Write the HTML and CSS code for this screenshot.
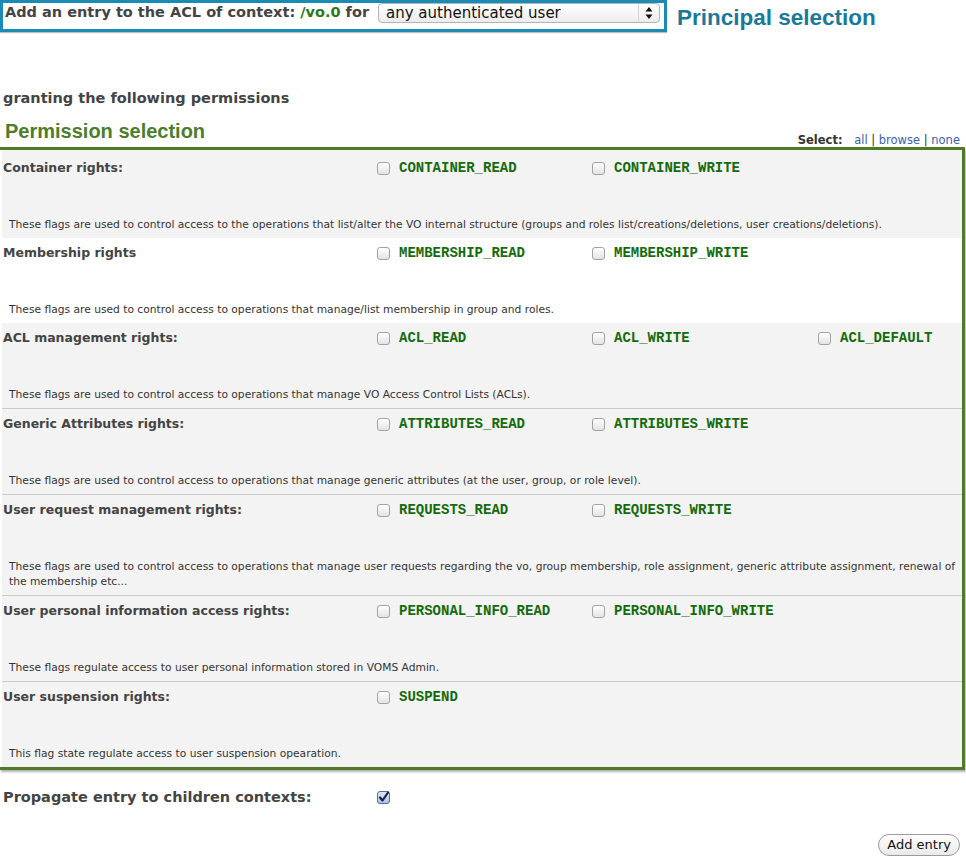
FILE: index.html
```html
<!DOCTYPE html>
<html>
<head>
<meta charset="utf-8">
<title>Add ACL entry</title>
<link rel="stylesheet" href="styles.css">
</head>
<body>
<div class="top">
  <div class="principal">
    <span class="lead">Add an entry to the ACL of context: <span class="ctx">/vo.0</span> for</span>
    <div class="select">
      <span class="select-text">any authenticated user</span>
      <span class="select-sep"></span>
      <svg class="select-arrows" width="8" height="12" viewBox="0 0 8 12"><path d="M4 0 L7.5 4.5 L0.5 4.5 Z M4 12 L7.5 7.5 L0.5 7.5 Z" fill="#111"/></svg>
    </div>
  </div>
  <div class="annot annot-blue">Principal selection</div>
</div>

<div class="granting">granting the following permissions</div>

<div class="perm-head">
  <div class="annot annot-green">Permission selection</div>
  <div class="select-links"><b>Select:</b> <a href="#">all</a> | <a href="#">browse</a> | <a href="#">none</a></div>
</div>

<div class="perm-box">
  <div class="group g-gray">
    <div class="grp-row">
      <div class="grp-label">Container rights:</div>
      <div class="perm"><span class="cb"></span><code>CONTAINER_READ</code></div>
      <div class="perm"><span class="cb"></span><code>CONTAINER_WRITE</code></div>
    </div>
    <div class="grp-desc">These flags are used to control access to the operations that list/alter the VO internal structure (groups and roles list/creations/deletions, user creations/deletions).</div>
  </div>

  <div class="group g-white">
    <div class="grp-row">
      <div class="grp-label">Membership rights</div>
      <div class="perm"><span class="cb"></span><code>MEMBERSHIP_READ</code></div>
      <div class="perm"><span class="cb"></span><code>MEMBERSHIP_WRITE</code></div>
    </div>
    <div class="grp-desc">These flags are used to control access to operations that manage/list membership in group and roles.</div>
  </div>

  <div class="group g-gray sep">
    <div class="grp-row">
      <div class="grp-label">ACL management rights:</div>
      <div class="perm"><span class="cb"></span><code>ACL_READ</code></div>
      <div class="perm"><span class="cb"></span><code>ACL_WRITE</code></div>
      <div class="perm"><span class="cb"></span><code>ACL_DEFAULT</code></div>
    </div>
    <div class="grp-desc">These flags are used to control access to operations that manage VO Access Control Lists (ACLs).</div>
  </div>

  <div class="group g-gray sep">
    <div class="grp-row">
      <div class="grp-label">Generic Attributes rights:</div>
      <div class="perm"><span class="cb"></span><code>ATTRIBUTES_READ</code></div>
      <div class="perm"><span class="cb"></span><code>ATTRIBUTES_WRITE</code></div>
    </div>
    <div class="grp-desc">These flags are used to control access to operations that manage generic attributes (at the user, group, or role level).</div>
  </div>

  <div class="group g-gray sep">
    <div class="grp-row">
      <div class="grp-label">User request management rights:</div>
      <div class="perm"><span class="cb"></span><code>REQUESTS_READ</code></div>
      <div class="perm"><span class="cb"></span><code>REQUESTS_WRITE</code></div>
    </div>
    <div class="grp-desc">These flags are used to control access to operations that manage user requests regarding the vo, group membership, role assignment, generic attribute assignment, renewal of the membership etc...</div>
  </div>

  <div class="group g-gray sep">
    <div class="grp-row">
      <div class="grp-label">User personal information access rights:</div>
      <div class="perm"><span class="cb"></span><code>PERSONAL_INFO_READ</code></div>
      <div class="perm"><span class="cb"></span><code>PERSONAL_INFO_WRITE</code></div>
    </div>
    <div class="grp-desc">These flags regulate access to user personal information stored in VOMS Admin.</div>
  </div>

  <div class="group g-gray">
    <div class="grp-row">
      <div class="grp-label">User suspension rights:</div>
      <div class="perm"><span class="cb"></span><code>SUSPEND</code></div>
    </div>
    <div class="grp-desc">This flag state regulate access to user suspension opearation.</div>
  </div>
</div>

<div class="propagate">
  <div class="prop-label">Propagate entry to children contexts:</div>
  <svg class="cb-checked" width="13" height="13" viewBox="0 0 13 13">
    <defs><linearGradient id="cbg" x1="0" y1="0" x2="0" y2="1"><stop offset="0" stop-color="#dfe9f7"/><stop offset="1" stop-color="#a9c1e3"/></linearGradient></defs>
    <rect x="0.5" y="0.5" width="12" height="12" rx="2.5" fill="url(#cbg)" stroke="#5b6f92"/>
    <path d="M3 6.5 L5.5 9.5 L11 1.5" fill="none" stroke="#14224d" stroke-width="2.2" stroke-linecap="round" stroke-linejoin="round"/>
  </svg>
</div>

<div class="actions"><button class="btn">Add entry</button></div>
</body>
</html>
```

FILE: styles.css
```css
body {
  margin: 0;
  font-family: "DejaVu Sans", "Liberation Sans", sans-serif;
  color: #444;
  background: #fff;
}

.top {
  display: flex;
  align-items: flex-start;
}

.principal {
  box-sizing: border-box;
  width: 667px;
  height: 32px;
  display: flex;
  align-items: flex-start;
  border: 3px solid #1a8bb4;
  padding: 0 4px 0 2px;
  box-shadow: 0 1px 1px rgba(0, 0, 0, 0.25);
}

.lead {
  font-size: 14.5px;
  font-weight: bold;
  line-height: 18px;
  color: #444;
  white-space: nowrap;
}

.ctx {
  color: #2a7a1c;
}

.select {
  margin-left: auto;
  box-sizing: border-box;
  width: 282px;
  height: 20px;
  display: flex;
  align-items: center;
  border: 1px solid #b4b4b4;
  border-radius: 4px;
  background: linear-gradient(#ffffff, #ececec);
  padding-left: 7px;
}

.select-text {
  font-size: 15px;
  color: #111;
  line-height: 18px;
  flex: 1;
}

.select-sep {
  width: 1px;
  height: 18px;
  background: #d6d6d6;
  margin-right: 6px;
}

.select-arrows {
  margin-right: 6px;
}

.annot {
  font-family: "Liberation Sans", Arial, sans-serif;
  font-weight: bold;
}

.annot-blue {
  color: #18799a;
  font-size: 22.5px;
  line-height: 26px;
  margin-left: 10px;
  margin-top: 5px;
}

.granting {
  margin-top: 56px;
  font-size: 14.5px;
  font-weight: bold;
  line-height: 20px;
  padding-left: 3px;
}

.perm-head {
  margin-top: 11px;
  height: 28px;
  display: flex;
  justify-content: space-between;
}

.annot-green {
  color: #4b7d2a;
  font-size: 20px;
  line-height: 24px;
  padding-left: 5px;
}

.select-links {
  align-self: flex-end;
  font-size: 11.5px;
  line-height: 14px;
  color: #333;
  margin-right: 6px;
}

.select-links b {
  margin-right: 8px;
}

.select-links a {
  color: #3a5fae;
  text-decoration: none;
}

.perm-box {
  border: 3px solid #4f7b29;
  border-left: 0;
  margin-right: 1px;
  padding-left: 2px;
  box-shadow: 1px 2px 2px rgba(0, 0, 0, 0.3);
}

.group {
  padding: 7px 2px 6px 1px;
}

.group:first-child {
  padding-top: 10px;
}

.g-gray {
  background: #f3f3f3;
}

.g-white {
  background: #fff;
}

.sep {
  border-bottom: 1px solid #cacaca;
}

.grp-row {
  display: grid;
  grid-template-columns: 374px 215px 226px 1fr;
  align-items: center;
  height: 16px;
}

.grp-label {
  font-size: 12.5px;
  font-weight: bold;
  line-height: 16px;
  color: #444;
}

.perm {
  display: flex;
  align-items: center;
  gap: 9px;
}

.cb {
  box-sizing: border-box;
  width: 13px;
  height: 13px;
  border: 1px solid #a2a2a2;
  border-radius: 3px;
  background: linear-gradient(#ffffff, #e3e3e3);
  box-shadow: inset 0 1px 0 #fff;
}

code {
  font-family: "Liberation Mono", "Courier New", monospace;
  font-size: 14px;
  font-weight: bold;
  color: #146b0c;
  line-height: 16px;
}

.grp-desc {
  margin-top: 41px;
  padding-left: 6px;
  font-size: 10.7px;
  line-height: 15px;
  color: #333;
}

.propagate {
  margin-top: 17px;
  display: flex;
  align-items: center;
  height: 20px;
}

.prop-label {
  width: 374px;
  padding-left: 3px;
  font-size: 14.5px;
  font-weight: bold;
  line-height: 20px;
}

.cb-checked {
  display: block;
}

.actions {
  margin-top: 27px;
  display: flex;
  justify-content: flex-end;
  padding-right: 6px;
}

.btn {
  font-family: "DejaVu Sans", sans-serif;
  font-size: 13px;
  color: #111;
  height: 22px;
  padding: 0 8px;
  border: 1px solid #9a9a9a;
  border-radius: 11px;
  background: linear-gradient(#ffffff, #e9e9e9);
  line-height: 18px;
}
```
